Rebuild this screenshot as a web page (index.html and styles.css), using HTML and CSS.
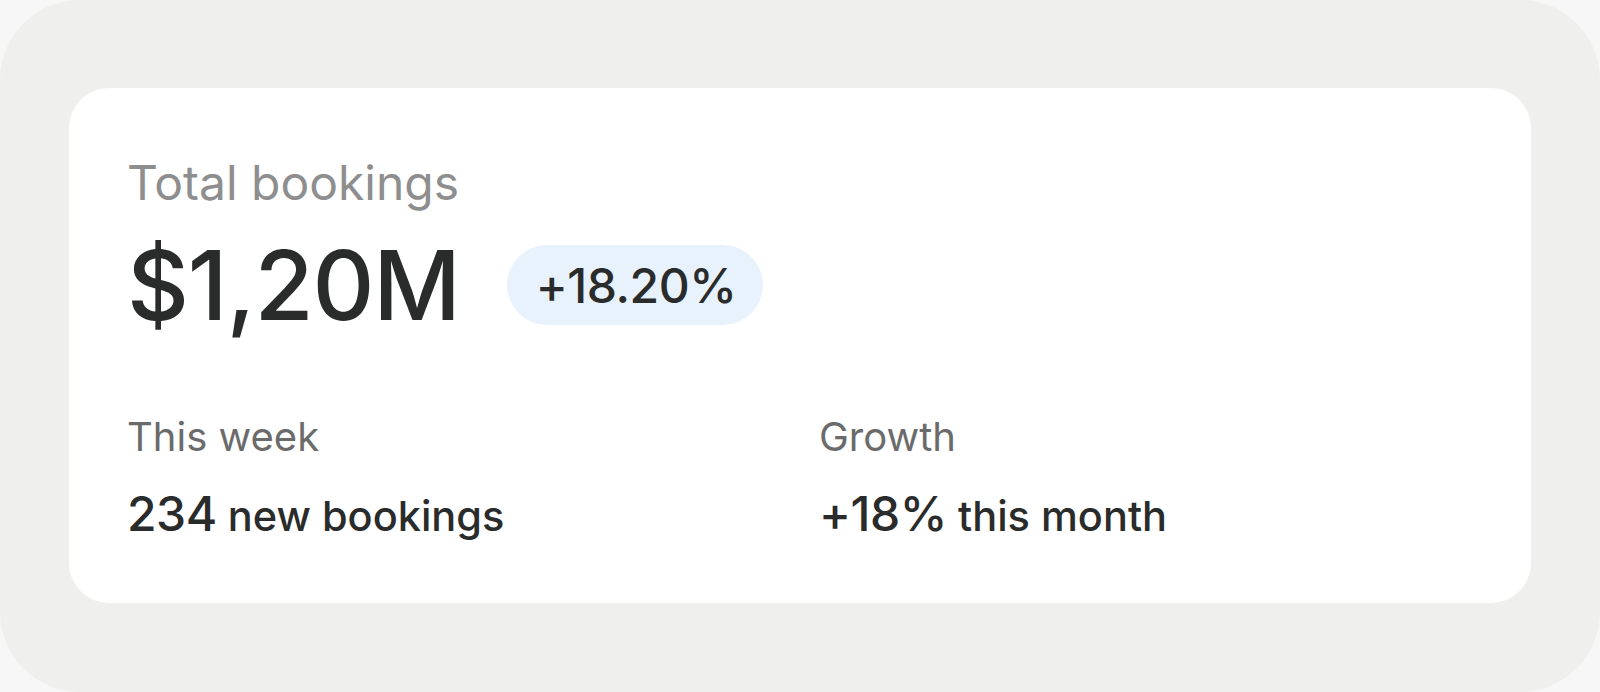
FILE: index.html
```html
<!DOCTYPE html>
<html>
<head>
<meta charset="utf-8">
<link rel="stylesheet" href="styles.css">
</head>
<body>
<div class="frame">
  <div class="card">
    <div class="title">Total bookings</div>
    <div class="main-row">
      <div class="amount">$1,20M</div>
      <div class="badge">+18.20%</div>
    </div>
    <div class="stats">
      <div class="stat">
        <div class="stat-label">This week</div>
        <div class="stat-value"><span class="num">234</span> new bookings</div>
      </div>
      <div class="stat">
        <div class="stat-label">Growth</div>
        <div class="stat-value"><span class="num">+18%</span> this month</div>
      </div>
    </div>
  </div>
</div>
</body>
</html>
```

FILE: styles.css
```css
* { box-sizing: border-box; }
html, body {
  margin: 0;
  padding: 0;
  background: #f7f7f7;
  font-family: Inter, "Noto Sans", sans-serif;
}
.frame {
  width: 1600px;
  height: 692px;
  background: #efefee;
  border-radius: 80px;
  padding: 88px 69px 89px 69px;
}
.card {
  background: #ffffff;
  border-radius: 40px;
  height: 515px;
  padding: 66px 58px 0 58px;
}
.title {
  font-size: 48px;
  line-height: 1.2;
  color: #8e8e8e;
}
.main-row {
  display: flex;
  align-items: center;
  gap: 47px;
  margin-top: 16px;
}
.amount {
  font-size: 96px;
  font-weight: 500;
  letter-spacing: -0.012em;
  line-height: 1.2;
  color: #2a2b2b;
}
.badge {
  height: 80px;
  border-radius: 40px;
  background: #e8f2fd;
  padding: 0 27px 0 29px;
  display: flex;
  align-items: center;
  font-size: 48px;
  font-weight: 500;
  letter-spacing: -0.01em;
  color: #2a2b2b;
}
.stats {
  display: grid;
  grid-template-columns: 692px 1fr;
  margin-top: 70px;
}
.stat-label {
  font-size: 40px;
  line-height: 1.2;
  color: #6b6b6b;
}
.stat-value {
  margin-top: 24px;
  font-size: 41.5px;
  font-weight: 500;
  line-height: 1.2;
  color: #2a2b2b;
}
.num {
  font-size: 48px;
  letter-spacing: -0.01em;
}
```
